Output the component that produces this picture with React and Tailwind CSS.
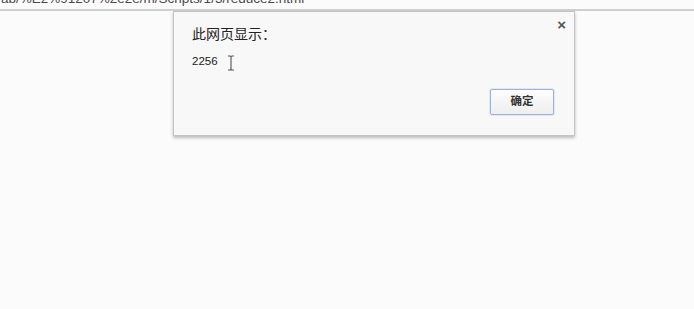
import React from "react";

export default function App() {
  return (
    <div
      className="relative w-[694px] h-[309px] overflow-hidden bg-[#fbfbfb]"
      style={{ fontFamily: '"Liberation Sans", "Noto Sans CJK SC", sans-serif' }}
    >
      <div className="h-[9px] overflow-hidden bg-[#fbfbfb]">
        <div className="-mt-[9px] pl-[1px] text-[13.5px] leading-[15px] text-[#4a4a4a] whitespace-nowrap">
          ab/%E2%91207%2e2e/m/Scripts/1/3/reduce2.html
        </div>
      </div>
      <div className="h-[2px] bg-[#cfcfcf]" />

      <div className="absolute left-[173px] top-[11px] w-[402px] h-[125px] bg-[#f8f8f8] border border-[#c4c4c4] shadow-[0_2px_3px_rgba(0,0,0,0.25)]">
        <button className="absolute right-[8px] top-[5px] text-[#555] text-[15px] leading-none font-bold">
          ×
        </button>
        <div className="pl-[18px] pt-[13px]">
          <div className="text-[14px] leading-[18px] text-[#222]">此网页显示：</div>
          <div className="mt-[11px] flex items-center h-[14px]">
            <span className="text-[11.5px] leading-[14px] text-[#222]">2256</span>
            <svg className="ml-[9px] mt-[4px]" width="8" height="16" viewBox="0 0 8 16" fill="none">
              <path d="M1 1 H3 Q4 1 4 2.5 V13.5 Q4 15 3 15 H1 M7 1 H5 Q4 1 4 2.5 M4 13.5 Q4 15 5 15 H7" stroke="#555" strokeWidth="1.1" />
            </svg>
          </div>
        </div>
        <div className="flex justify-end pr-[20px] mt-[21px]">
          <button className="w-[64px] h-[26px] rounded-[2px] border border-[#a0b3d6] bg-gradient-to-b from-[#fdfdfd] to-[#eeeeee] text-[11.5px] font-bold text-[#333] shadow-[0_0_0_1px_rgba(200,215,240,0.5)]">
            确定
          </button>
        </div>
      </div>
    </div>
  );
}
